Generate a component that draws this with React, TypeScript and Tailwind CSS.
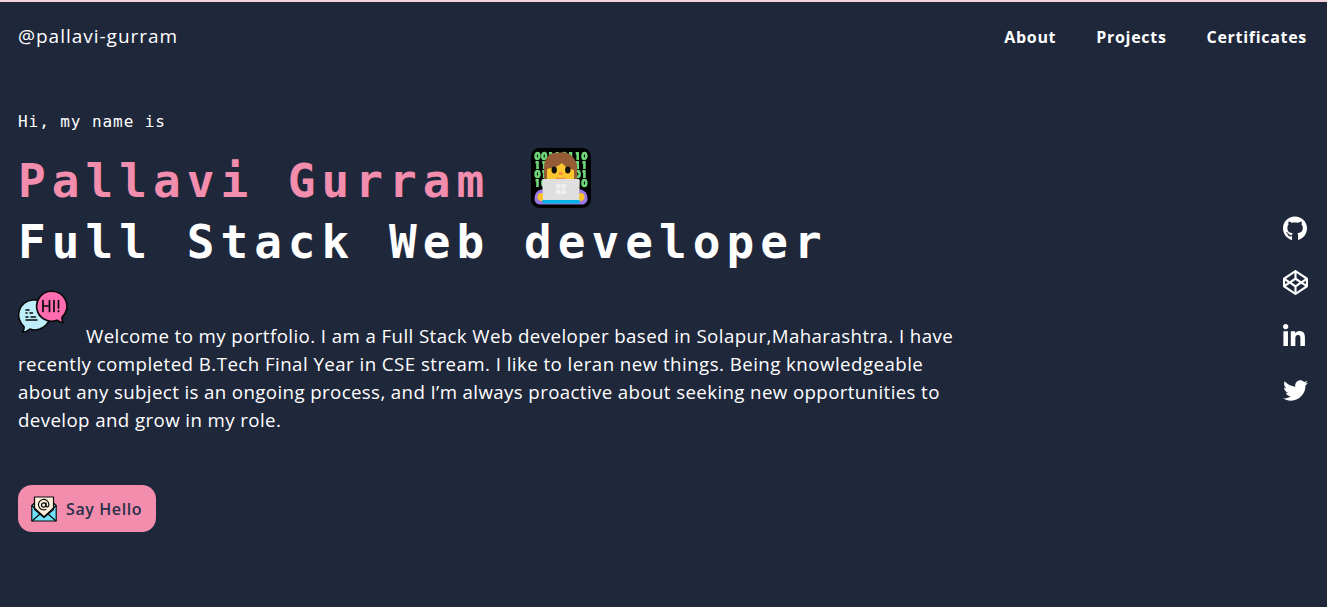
import { FaCodepen, FaGithub, FaLinkedinIn, FaTwitter } from "react-icons/fa";

const bitRows = ["00110110", "11010011", "01001001", "10110110"];

function CoderIcon() {
  return (
    <svg viewBox="0 0 60 60" className="h-[60px] w-[60px] shrink-0">
      <rect width="60" height="60" rx="8.5" fill="#000" />
      <g fill="none" stroke="#6fd67a" strokeWidth="2.600">
        {bitRows.map((row, r) =>
          row.split("").map((bit, c) => {
            const x = 6.5 + c * 6.7;
            const y = 8 + r * 9;
            return bit === "0" ? (
              <ellipse key={`${r}-${c}`} cx={x} cy={y} rx="1.900" ry="3" />
            ) : (
              <path key={`${r}-${c}`} d={`M${x - 2} ${y - 2.6}H${x}V${y + 4}`} />
            );
          }),
        )}
      </g>
      <path d="M3.500 51C3.500 43 9 41 15 41h30c6 0 11.500 2 11.500 10 0 3.500-3 5.500-6 5.500H10c-4 0-6.500-2-6.500-5.500Z" fill="#9a78ea" />
      <path d="M13 38V20C13 9 20 3.500 27 5c8-3 19 3 19 15v18Z" fill="#955d36" />
      <path d="M16 21c7-1 12-3 15-6 3 4 7 6 12 7v7c0 7-5 12-13.500 12S16 36 16 29Z" fill="#fdc62f" />
      <ellipse cx="23.200" cy="22" rx="2.700" ry="3.400" fill="#111" />
      <ellipse cx="36.800" cy="22" rx="2.700" ry="3.400" fill="#111" />
      <ellipse cx="29.800" cy="25.600" rx="2.200" ry="1.500" fill="#f78b45" />
      <path d="M25 29q5 2.300 9.500 0-1 3-4.700 3T25 29Z" fill="#ee8750" />
      <circle cx="10.500" cy="49" r="4" fill="#fcc329" />
      <circle cx="49.500" cy="49" r="4" fill="#fcc329" />
      <rect x="11.500" y="51" width="37" height="4.500" rx="1.500" fill="#00b3e6" />
      <path d="M13 31h34q1.800 0 1.800 1.800L48 52H12l-.8-19.200Q11.200 31 13 31Z" fill="#e0dfe0" />
      <path d="M25 36h4.500v4.500H25Zm5.500 0H35v4.500h-4.500ZM25 41.500h4.500V46H25Zm5.500 0H35V46h-4.500Z" fill="#f0eff0" />
    </svg>
  );
}

function ChatIcon() {
  return (
    <svg viewBox="1 0 50 44" className="h-[44px] w-[50px]" stroke="#080808" strokeWidth="1.600" strokeLinejoin="round" strokeLinecap="round">
      <path d="M16 10a15 15 0 0 0-9 26.500q.5 3.500-1.500 5.500 4.500 0 7.500-3A15 15 0 1 0 16 10Z" fill="#bdeefa" />
      <path d="M34.500 1.200a15 15 0 1 0 5.500 29q3 2.500 6.500 2.600-2-2.500-1.500-5.500A15 15 0 0 0 34.500 1.200Z" fill="#ff6db0" />
      <path d="M9 20h3M9 23h1M13 23h2.500M9 27h2M14 27h4.500M9 30h11" strokeWidth="1.500" fill="none" />
      <path d="M26 10.500v11M32.500 10.500v11M26 16H32.500M37 10.500v11M41.500 10.500v7.500M41.500 20.800v.6" strokeWidth="1.700" fill="none" />
    </svg>
  );
}

function MailIcon() {
  return (
    <svg viewBox="0 0 26 26" className="h-[26px] w-[26px] shrink-0" stroke="#0a0a0a" strokeWidth="1.200" strokeLinejoin="round">
      <path d="M.8 9.500 4 6.500h18l3.200 3V25H.8Z" fill="#6ee3fb" />
      <path d="M3.500 1h19v12.500L13 21.500 3.500 13.500Z" fill="#fff0dc" />
      <path d="m.8 9.500 11 10.200q1.200 1 2.400 0l11-10.200M1 25l8.500-7.500M25 25l-8.500-7.500" fill="none" />
      <circle cx="12.700" cy="9" r="2.200" fill="none" />
      <path d="M15 6.500V9.600q.3 1.600 1.600 1.300 1.300-.5 1.300-2.400a5.200 5.200 0 1 0-2.700 4.700" fill="none" />
    </svg>
  );
}

export default function App() {
  return (
    <div className="flex h-[607px] flex-col overflow-hidden border-t-2 border-[#f4d3da] bg-[#1f273b] font-['Open_Sans',sans-serif] text-white">
      <header className="flex h-[68px] items-center justify-between pr-[20px] pl-[18px]">
        <a className="text-[19px] tracking-[0.980px]">@pallavi-gurram</a>
        <nav className="flex gap-[40px] pt-[2px] text-[16px] font-bold">
          <a className="tracking-[0.7px]">About</a>
          <a className="tracking-[0.7px]">Projects</a>
          <a className="tracking-[0.7px]">Certificates</a>
        </nav>
      </header>
      <div className="flex justify-between pl-[18px]">
        <main className="flex flex-col items-start whitespace-pre">
          <p className="mt-[39px] h-[26px] font-['DejaVu_Sans_Mono',monospace] text-[16px] leading-[26px] tracking-[0.930px]">Hi, my name is</p>
          <h1 className="mt-[12px] font-['DejaVu_Sans_Mono',monospace] text-[46px] leading-[61px] font-bold tracking-[6.040px]">
            <span className="flex h-[61px] items-center gap-[41px] text-[#f38dae]">
              <span className="pt-[6px] leading-[66px]">Pallavi Gurram</span>
              <CoderIcon />
            </span>
            <span className="block h-[61px] leading-[69px]">Full Stack Web developer</span>
          </h1>
          <div className="mt-[21px] text-[18.700px] leading-[28px]">
            <div className="flex h-[60px] items-start">
              <ChatIcon />
              <span className="mt-[32px] ml-[18px] tracking-[0.410px]">Welcome to my portfolio. I am a Full Stack Web developer based in Solapur,Maharashtra. I have</span>
            </div>
            <p className="tracking-[0.450px]">recently completed B.Tech Final Year in CSE stream. I like to leran new things. Being knowledgeable</p>
            <p className="tracking-[0.380px]">about any subject is an ongoing process, and I’m always proactive about seeking new opportunities to</p>
            <p className="tracking-[0.4px]">develop and grow in my role.</p>
          </div>
          <button className="mt-[51px] flex h-[47px] w-[138px] items-center gap-[9px] rounded-[14px] bg-[#f38dae] pl-[13px] text-[16px] font-semibold tracking-[0.6px] text-[#29304a]">
            <MailIcon />
            <span>Say Hello</span>
          </button>
        </main>
        <aside className="mt-[146px] flex w-[44px] flex-col gap-[29px]">
          <FaGithub className="h-[25px] w-[24px]" />
          <FaCodepen className="h-[25px] w-[25px]" />
          <FaLinkedinIn className="h-[25px] w-[22px]" />
          <FaTwitter className="h-[25px] w-[25px]" />
        </aside>
      </div>
    </div>
  );
}
